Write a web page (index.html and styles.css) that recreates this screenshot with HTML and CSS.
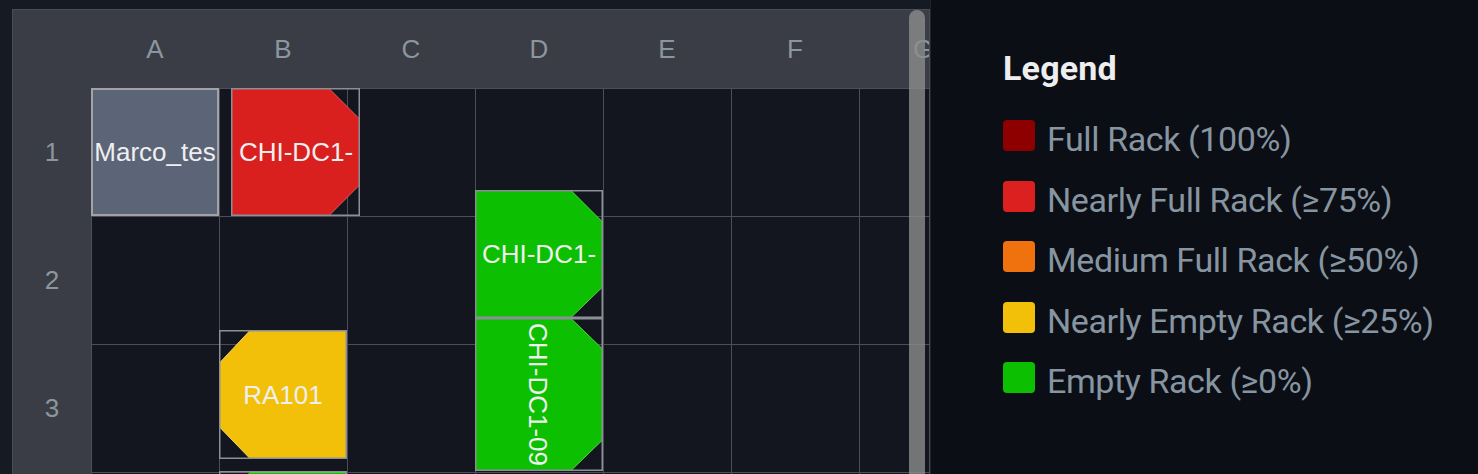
FILE: index.html
```html
<!DOCTYPE html>
<html lang="en">
<head>
<meta charset="utf-8">
<title>Floor plan</title>
<link rel="stylesheet" href="styles.css">
</head>
<body>
<main class="floor">
  <section class="plan">
    <div class="grid">
      <div class="corner"></div>
      <div class="colhead">A</div>
      <div class="colhead">B</div>
      <div class="colhead">C</div>
      <div class="colhead">D</div>
      <div class="colhead">E</div>
      <div class="colhead">F</div>
      <div class="colhead">G</div>

      <div class="rowhead">1</div>
      <div class="cell"></div><div class="cell"></div><div class="cell"></div><div class="cell"></div><div class="cell"></div><div class="cell"></div><div class="cell"></div>
      <div class="rowhead">2</div>
      <div class="cell"></div><div class="cell"></div><div class="cell"></div><div class="cell"></div><div class="cell"></div><div class="cell"></div><div class="cell"></div>
      <div class="rowhead">3</div>
      <div class="cell"></div><div class="cell"></div><div class="cell"></div><div class="cell"></div><div class="cell"></div><div class="cell"></div><div class="cell"></div>
      <div class="rowhead"></div>
      <div class="cell"></div><div class="cell"></div><div class="cell"></div><div class="cell"></div><div class="cell"></div><div class="cell"></div><div class="cell"></div>
    </div>

    <svg class="racks" width="900" height="420" viewBox="0 0 900 420">
      <!-- Marco_tes -->
      <g transform="translate(0,0)">
        <rect class="plain" x="1" y="1" width="126" height="126"></rect>
        <text class="label" x="64" y="73.3">Marco_tes</text>
      </g>
      <!-- red, chamfered right -->
      <g transform="translate(140,0)">
        <polygon class="shape red" points="0.5,0.5 98,0.5 128.5,31 128.5,97 98,127.5 0.5,127.5"></polygon>
        <rect class="box" x="0.75" y="0.75" width="127.5" height="126.5"></rect>
        <text class="label" x="65" y="73.3">CHI-DC1-</text>
      </g>
      <!-- green, chamfered right -->
      <g transform="translate(384,102)">
        <polygon class="shape green" points="0.5,0.5 96,0.5 127.5,32 127.5,97 96,127.5 0.5,127.5"></polygon>
        <rect class="box" x="0.75" y="0.75" width="126.5" height="126.5"></rect>
        <text class="label" x="64" y="73.3">CHI-DC1-</text>
      </g>
      <!-- green vertical -->
      <g transform="translate(384,230)">
        <polygon class="shape green" points="0.5,0.5 96,0.5 127.5,31 127.5,122 96,152.5 0.5,152.5"></polygon>
        <rect class="box" x="0.75" y="0.75" width="126.5" height="151.5"></rect>
        <text class="label" transform="translate(63.5,76.5) rotate(90)" x="0" y="9.3">CHI-DC1-09</text>
      </g>
      <!-- yellow, chamfered left -->
      <g transform="translate(128,242)">
        <polygon class="shape yellow" points="31,0.5 127.5,0.5 127.5,128.5 31,128.5 0.5,97 0.5,33"></polygon>
        <rect class="box" x="0.75" y="0.75" width="126.5" height="127.5"></rect>
        <text class="label" x="64" y="73.8">RA101</text>
      </g>
      <!-- green, chamfered left (row 4) -->
      <g transform="translate(128,383)">
        <polygon class="shape green" points="31,1.5 127.5,1.5 127.5,128.5 31,128.5 0.5,97 0.5,33"></polygon>
        <rect class="box" x="0.75" y="0.75" width="126.5" height="127.5"></rect>
      </g>
    </svg>

    <div class="thumb"></div>
  </section>
</main>

<aside class="legend">
  <h2 class="legend-title">Legend</h2>
  <ul class="items">
    <li class="item"><span class="swatch full"></span><span>Full Rack (100%)</span></li>
    <li class="item"><span class="swatch nearly-full"></span><span>Nearly Full Rack (≥75%)</span></li>
    <li class="item"><span class="swatch medium"></span><span>Medium Full Rack (≥50%)</span></li>
    <li class="item"><span class="swatch nearly-empty"></span><span>Nearly Empty Rack (≥25%)</span></li>
    <li class="item"><span class="swatch empty"></span><span>Empty Rack (≥0%)</span></li>
  </ul>
</aside>
</body>
</html>
```

FILE: styles.css
```css
* { box-sizing: border-box; }

html, body {
  margin: 0;
  padding: 0;
}

body {
  display: flex;
  width: 1478px;
  height: 474px;
  overflow: hidden;
  background: #0b0e15;
  font-family: "Liberation Sans", Arial, sans-serif;
}

.floor {
  flex: none;
  width: 930px;
  height: 474px;
  background: #161a22;
  padding: 9px 0 0 12px;
  overflow: hidden;
}

.plan {
  position: relative;
  width: 918px;
  height: 500px;
  border: 1px solid #4a4d55;
  background: #3a3d45;
  overflow: hidden;
}

.grid {
  display: grid;
  grid-template-columns: 78px repeat(7, 128px);
  grid-template-rows: 78px repeat(4, 128px);
}

.colhead,
.rowhead {
  display: flex;
  align-items: center;
  justify-content: center;
  color: #8b969f;
  font-size: 26px;
}

.cell {
  background: #13161e;
  border-left: 1px solid #4b4e56;
  border-top: 1px solid #4b4e56;
}

.racks {
  position: absolute;
  left: 78px;
  top: 78px;
  overflow: visible;
  pointer-events: none;
}

.racks .label {
  fill: #efefef;
  font-family: "Liberation Sans", Arial, sans-serif;
  font-size: 26px;
  text-anchor: middle;
}

.racks .plain {
  fill: #5c6577;
  stroke: #a0a4aa;
  stroke-width: 2;
}

.racks .box {
  fill: none;
  stroke: #8c9096;
  stroke-width: 1.5;
}

.racks .shape { stroke-width: 1; }
.racks .red { fill: #da1f1f; stroke: #e85a5a; }
.racks .green { fill: #0cbf00; stroke: #4fd845; }
.racks .yellow { fill: #f2c008; stroke: #f7d65a; }

.thumb {
  position: absolute;
  left: 896px;
  top: 0;
  width: 16px;
  height: 600px;
  border-radius: 8px;
  background: rgba(140, 140, 140, 0.8);
}

.legend {
  flex: 1;
  height: 474px;
  border-left: 1px solid #20232a;
  padding: 48px 0 0 72px;
  font-family: Roboto, "Noto Sans", sans-serif;
}

.legend-title {
  margin: 0;
  font-size: 34px;
  line-height: 40px;
  font-weight: 700;
  color: #eeeeee;
  letter-spacing: 0.2px;
}

.items {
  list-style: none;
  margin: 31px 0 0;
  padding: 0;
  display: flex;
  flex-direction: column;
  gap: 20.5px;
}

.item {
  display: flex;
  align-items: flex-start;
  gap: 12px;
  height: 40px;
  font-size: 34px;
  line-height: 40px;
  color: #8795a1;
  letter-spacing: -0.4px;
}

.swatch {
  flex: none;
  width: 32px;
  height: 31px;
  margin-top: 1px;
  border-radius: 4px;
}

.swatch.full { background: #8e0000; }
.swatch.nearly-full { background: #dc2020; }
.swatch.medium { background: #ef720f; }
.swatch.nearly-empty { background: #f2c008; }
.swatch.empty { background: #0cbf00; }
```
